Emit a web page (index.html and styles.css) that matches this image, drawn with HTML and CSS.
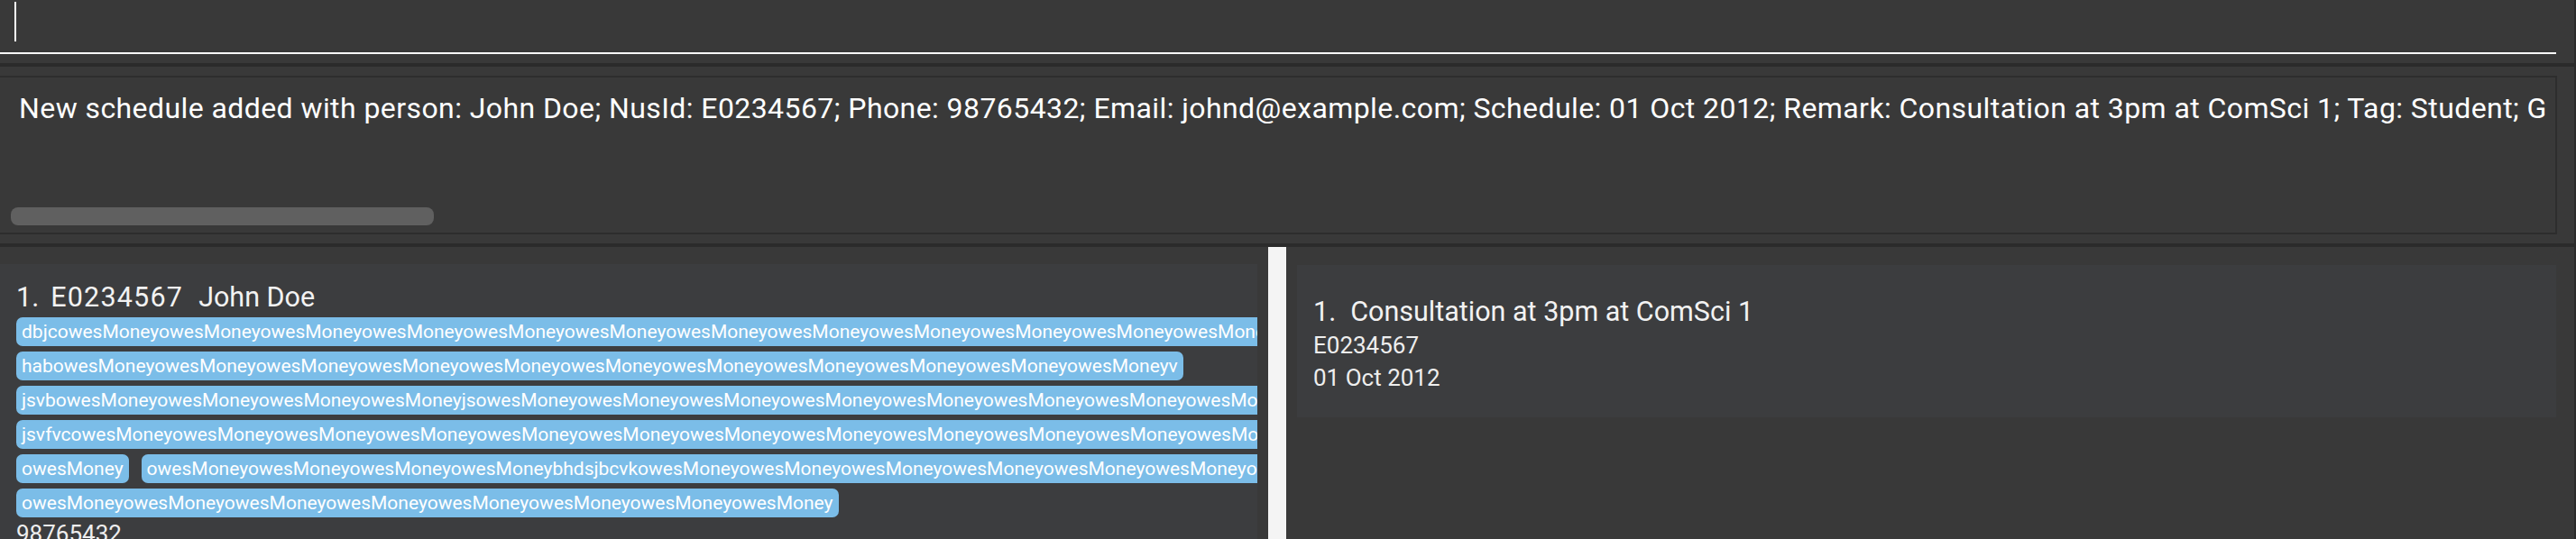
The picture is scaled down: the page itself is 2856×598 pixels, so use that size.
FILE: index.html
```html
<!DOCTYPE html>
<html lang="en">
<head>
<meta charset="utf-8">
<title>Schedule</title>
<link rel="stylesheet" href="styles.css">
</head>
<body>
<div class="app">
  <div class="command">
    <div class="field"><span class="caret"></span></div>
  </div>
  <div class="result">
    <div class="result-box">
      <div class="result-text">New schedule added with person: John Doe; NusId: E0234567; Phone: 98765432; Email: johnd@example.com; Schedule: 01 Oct 2012; Remark: Consultation at 3pm at ComSci 1; Tag: Student; G</div>
      <div class="hscroll"><div class="thumb"></div></div>
    </div>
  </div>
  <div class="lists">
    <div class="pane person-pane">
      <div class="card person-card">
        <div class="title"><span class="idx">1.</span><span class="nusid">E0234567</span><span class="name">John Doe</span></div>
        <div class="tags">
          <span class="tag">dbjcowesMoneyowesMoneyowesMoneyowesMoneyowesMoneyowesMoneyowesMoneyowesMoneyowesMoneyowesMoneyowesMoneyowesMoneyowesMoneyowesMoneyowesMoneyowesMoneyowesMoneyowesMoneyowesMoneyowesMoney</span>
          <span class="tag">habowesMoneyowesMoneyowesMoneyowesMoneyowesMoneyowesMoneyowesMoneyowesMoneyowesMoneyowesMoneyowesMoneyv</span>
          <span class="tag">jsvbowesMoneyowesMoneyowesMoneyowesMoneyjsowesMoneyowesMoneyowesMoneyowesMoneyowesMoneyowesMoneyowesMoneyowesMoneyowesMoneyowesMoneyowesMoneyowesMoneyowesMoneyowesMoneyowesMoneyowesMoney</span>
          <span class="tag">jsvfvcowesMoneyowesMoneyowesMoneyowesMoneyowesMoneyowesMoneyowesMoneyowesMoneyowesMoneyowesMoneyowesMoneyowesMoneyowesMoneyowesMoneyowesMoneyowesMoneyowesMoneyowesMoneyowesMoneyowesMoney</span>
          <span class="tag-row">
            <span class="tag">owesMoney</span>
            <span class="tag">owesMoneyowesMoneyowesMoneyowesMoneybhdsjbcvkowesMoneyowesMoneyowesMoneyowesMoneyowesMoneyowesMoneyowesMoneyowesMoneyowesMoneyowesMoneyowesMoneyowesMoneyowesMoneyowesMoneyowesMoneyowesMoney</span>
          </span>
          <span class="tag">owesMoneyowesMoneyowesMoneyowesMoneyowesMoneyowesMoneyowesMoneyowesMoney</span>
        </div>
        <div class="small">98765432</div>
      </div>
    </div>
    <div class="splitter"></div>
    <div class="pane schedule-pane">
      <div class="card schedule-card">
        <div class="title"><span class="idx">1.</span><span class="remark">Consultation at 3pm at ComSci 1</span></div>
        <div class="small">E0234567</div>
        <div class="small">01 Oct 2012</div>
      </div>
    </div>
  </div>
</div>
</body>
</html>
```
FILE: styles.css
```css
html, body {
  margin: 0;
  padding: 0;
}

body {
  width: 2856px;
  height: 598px;
  overflow: hidden;
  background: #2b2b2b;
  font-family: Roboto, "Liberation Sans", sans-serif;
  color: #ffffff;
}

.app {
  width: 2854px;
  height: 598px;
  display: flex;
  flex-direction: column;
  gap: 4px;
}

.command {
  height: 70px;
  flex-shrink: 0;
  background: #393939;
}

.field {
  box-sizing: border-box;
  width: 2834px;
  height: 60px;
  padding: 2px 0 0 16px;
  border-bottom: 2px solid #ffffff;
  display: flex;
  align-items: flex-start;
}

.caret {
  width: 2px;
  height: 44px;
  background: #ffffff;
}

.result {
  box-sizing: border-box;
  height: 196px;
  flex-shrink: 0;
  padding: 10px 19px 10px 0;
  background: #393939;
}

.result-box {
  box-sizing: border-box;
  height: 176px;
  border: 2px solid #2d2d2d;
  border-left: 0;
  display: flex;
  flex-direction: column;
  justify-content: space-between;
  overflow: hidden;
}

.result-text {
  padding: 15px 0 0 21px;
  font-size: 32px;
  letter-spacing: 0.42px;
  line-height: 38px;
  white-space: nowrap;
  color: #ffffff;
}

.hscroll {
  padding: 0 0 8px 12px;
}

.thumb {
  width: 469px;
  height: 20px;
  border-radius: 8px;
  background: #606060;
}

.lists {
  flex: 1;
  min-height: 0;
  display: flex;
}

.pane {
  box-sizing: border-box;
  background: #393939;
  overflow: hidden;
}

.person-pane {
  width: 1406px;
  flex-shrink: 0;
  padding: 19px 12px 0 0;
}

.card {
  background: #3c3d3f;
  overflow: hidden;
  color: #f0f0f0;
}

.person-card {
  padding: 18.4px 0 0 18px;
}

.title {
  display: flex;
  font-size: 30.5px;
  line-height: 38px;
  white-space: nowrap;
  color: #f2f2f2;
}

.person-card .idx {
  margin-right: 13px;
}

.nusid {
  letter-spacing: 1.2px;
  margin-right: 17px;
}

.schedule-card .idx {
  margin-right: 16px;
}

.tags {
  display: flex;
  flex-wrap: wrap;
  gap: 6px 14px;
  margin-top: 2.6px;
}

.tag-row {
  display: flex;
  flex-shrink: 0;
  gap: 14px;
}

.tag {
  flex-shrink: 0;
  height: 32px;
  line-height: 32px;
  padding: 0 6px;
  border-radius: 7px;
  background: #7bbde8;
  color: #ffffff;
  font-size: 21px;
  white-space: nowrap;
}

.small {
  font-size: 26px;
  line-height: 36px;
  white-space: nowrap;
  color: #eeeeee;
}

.splitter {
  width: 20px;
  flex-shrink: 0;
  background: #f4f4f4;
}

.schedule-pane {
  flex: 1;
  padding: 20px 20px 0 12px;
}

.schedule-card {
  box-sizing: border-box;
  height: 169px;
  padding: 33.4px 0 0 18px;
}
```
